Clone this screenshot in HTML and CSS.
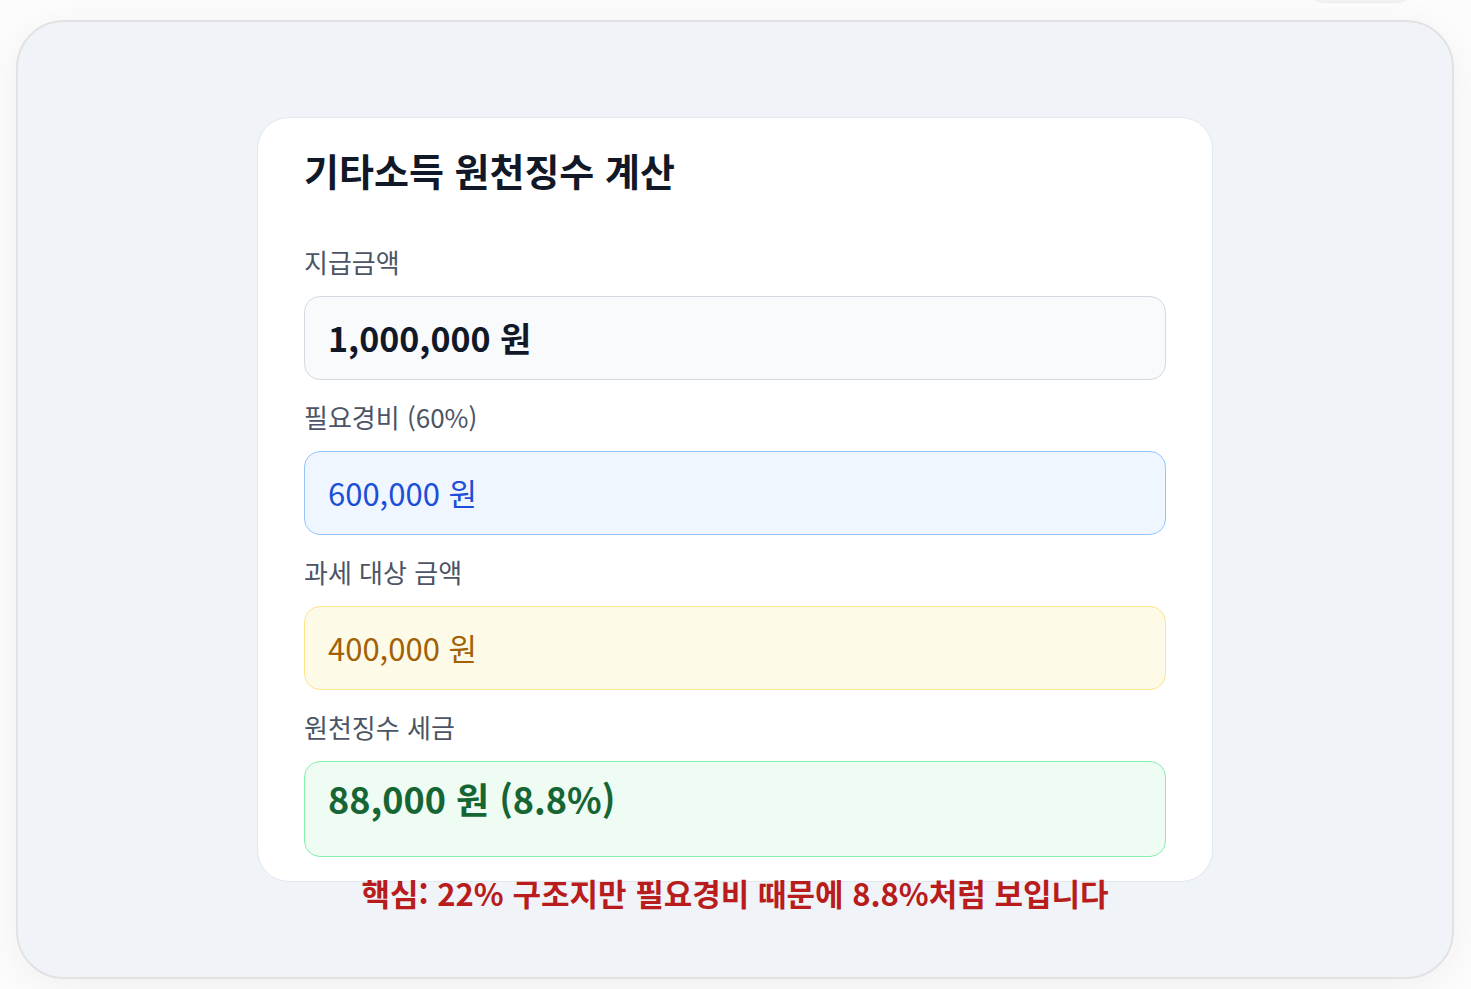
FILE: index.html
```html
<!DOCTYPE html>
<html lang="ko">
<head>
<meta charset="utf-8">
<title>기타소득 원천징수 계산</title>
<link rel="stylesheet" href="styles.css">
</head>
<body>
<div class="tab-pill"></div>
<main class="frame">
  <section class="card">
    <h1 class="card-title">기타소득 원천징수 계산</h1>

    <div class="field">
      <div class="field-label">지급금액</div>
      <div class="value value-total">1,000,000 원</div>
    </div>

    <div class="field">
      <div class="field-label">필요경비 (60%)</div>
      <div class="value value-expense">600,000 원</div>
    </div>

    <div class="field">
      <div class="field-label">과세 대상 금액</div>
      <div class="value value-taxable">400,000 원</div>
    </div>

    <div class="field">
      <div class="field-label">원천징수 세금</div>
      <div class="value value-tax">88,000 원 (8.8%)</div>
    </div>
  </section>
  <p class="note">핵심: 22% 구조지만 필요경비 때문에 8.8%처럼 보입니다</p>
</main>
</body>
</html>
```

FILE: styles.css
```css
* {
  box-sizing: border-box;
}

html, body {
  margin: 0;
  padding: 0;
}

body {
  background: #fcfcfc;
  font-family: "Noto Sans CJK KR", "Noto Sans", sans-serif;
  height: 989px;
  overflow: hidden;
  position: relative;
  padding: 20px 17px 0 16px;
}

/* partially visible control above the frame */
.tab-pill {
  position: absolute;
  top: -40px;
  left: 1304px;
  width: 114px;
  height: 43px;
  border-radius: 22px;
  background: #f3f3f4;
  border: 1px solid #ececec;
}

.frame {
  width: 1438px;
  height: 959px;
  background: #f0f3f8;
  border: 2px solid #e2e2e3;
  border-radius: 48px;
  box-shadow: 0 8px 40px rgba(0, 0, 0, 0.05);
  padding-top: 95px;
  display: flex;
  flex-direction: column;
  align-items: center;
}

.card {
  width: 956px;
  height: 765px;
  background: #ffffff;
  border: 1px solid #e2e8f0;
  border-radius: 32px;
  padding: 28px 46px 24px 46px;
}

.card-title {
  margin: 0 0 51px 0;
  font-size: 38px;
  line-height: 48px;
  font-weight: 700;
  color: #111827;
}

.field + .field {
  margin-top: 20px;
}

.field-label {
  font-size: 26px;
  line-height: 34px;
  color: #4b5565;
  margin-bottom: 17px;
}

.value {
  height: 84px;
  border: 1px solid;
  border-radius: 16px;
  padding: 0 24px 0 23px;
  display: flex;
  align-items: center;
  line-height: 44px;
}

.value-total {
  background: #f8fafc;
  border-color: #d3dae3;
  color: #111827;
  font-size: 34px;
  font-weight: 700;
}

.value-expense {
  background: #eff6ff;
  border-color: #93c5fd;
  color: #1d4ed8;
  font-size: 31px;
}

.value-taxable {
  background: #fefae8;
  border-color: #fde68a;
  color: #a16207;
  font-size: 31px;
}

.value-tax {
  height: 96px;
  align-items: flex-start;
  padding-top: 10px;
  line-height: 52px;
  background: #effcf3;
  border-color: #86efac;
  color: #166534;
  font-size: 36px;
  font-weight: 700;
}

.note {
  margin: -7px 0 0 0;
  font-size: 31px;
  line-height: 36px;
  font-weight: 700;
  color: #b91c1c;
  text-align: center;
}
```
